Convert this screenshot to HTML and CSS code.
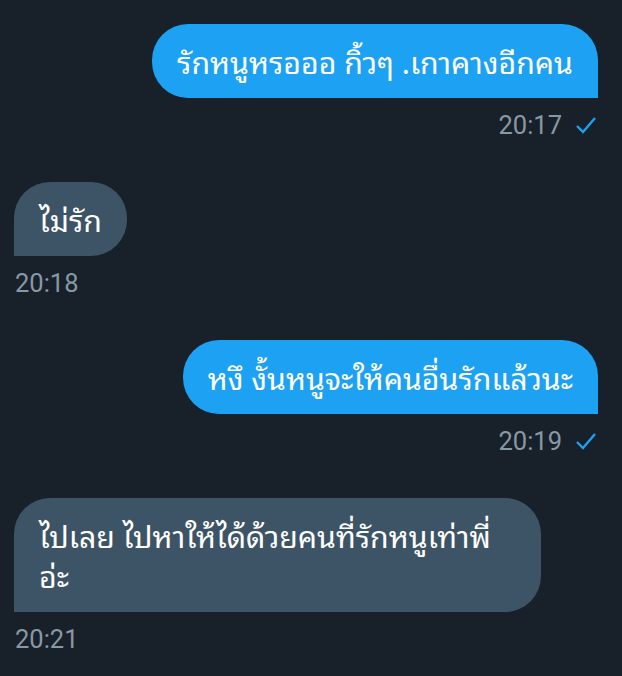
FILE: index.html
```html
<!DOCTYPE html>
<html lang="th">
<head>
    <meta charset="UTF-8">
    <meta name="viewport" content="width=device-width, initial-scale=1.0">
    <title>Messages</title>
    <link rel="stylesheet" href="styles.css">
</head>
<body>
    <div class="chat">
        <div class="msg sent">
            <div class="bubble">รักหนูหรอออ กิ้วๆ .เกาคางอีกคน</div>
            <div class="meta">20:17
                <svg class="check" viewBox="0 0 24 24"><path d="M3 13l6 6L21 5"/></svg>
            </div>
        </div>

        <div class="msg received">
            <div class="bubble">ไม่รัก</div>
            <div class="meta">20:18</div>
        </div>

        <div class="msg sent">
            <div class="bubble">หงึ งั้นหนูจะให้คนอื่นรักแล้วนะ</div>
            <div class="meta">20:19
                <svg class="check" viewBox="0 0 24 24"><path d="M3 13l6 6L21 5"/></svg>
            </div>
        </div>

        <div class="msg received">
            <div class="bubble wide">ไปเลย ไปหาให้ได้ด้วยคนที่รักหนูเท่าพี่<br>อ่ะ</div>
            <div class="meta">20:21</div>
        </div>
    </div>
</body>
</html>
```

FILE: styles.css
```css
body {
    margin: 0;
    background-color: #18202a;
    font-family: "Noto Sans Thai Looped", "Noto Sans Thai", "Noto Sans", Roboto, sans-serif;
}
.chat {
    display: flex;
    flex-direction: column;
    padding: 24px 24px 0 14px;
}
.msg {
    display: flex;
    flex-direction: column;
    margin-bottom: 42px;
}
.msg.sent {
    align-items: flex-end;
}
.msg.received {
    align-items: flex-start;
}
.bubble {
    box-sizing: border-box;
    font-size: 30.3px;
    line-height: 40px;
    color: #fff;
    padding: 17px 25px;
    border-radius: 36px;
}
.sent .bubble {
    background-color: #1da1f2;
    border-bottom-right-radius: 0;
}
.received .bubble {
    background-color: #3d5466;
    border-bottom-left-radius: 0;
}
.bubble.wide {
    width: 527px;
}
.meta {
    display: flex;
    align-items: center;
    gap: 12px;
    margin-top: 12px;
    font-family: Roboto, sans-serif;
    font-size: 25.5px;
    color: #8899a6;
}
.received .meta {
    margin-left: 1px;
}
.check {
    width: 24px;
    height: 24px;
    fill: none;
    stroke: #1da1f2;
    stroke-width: 2.4;
}
```
